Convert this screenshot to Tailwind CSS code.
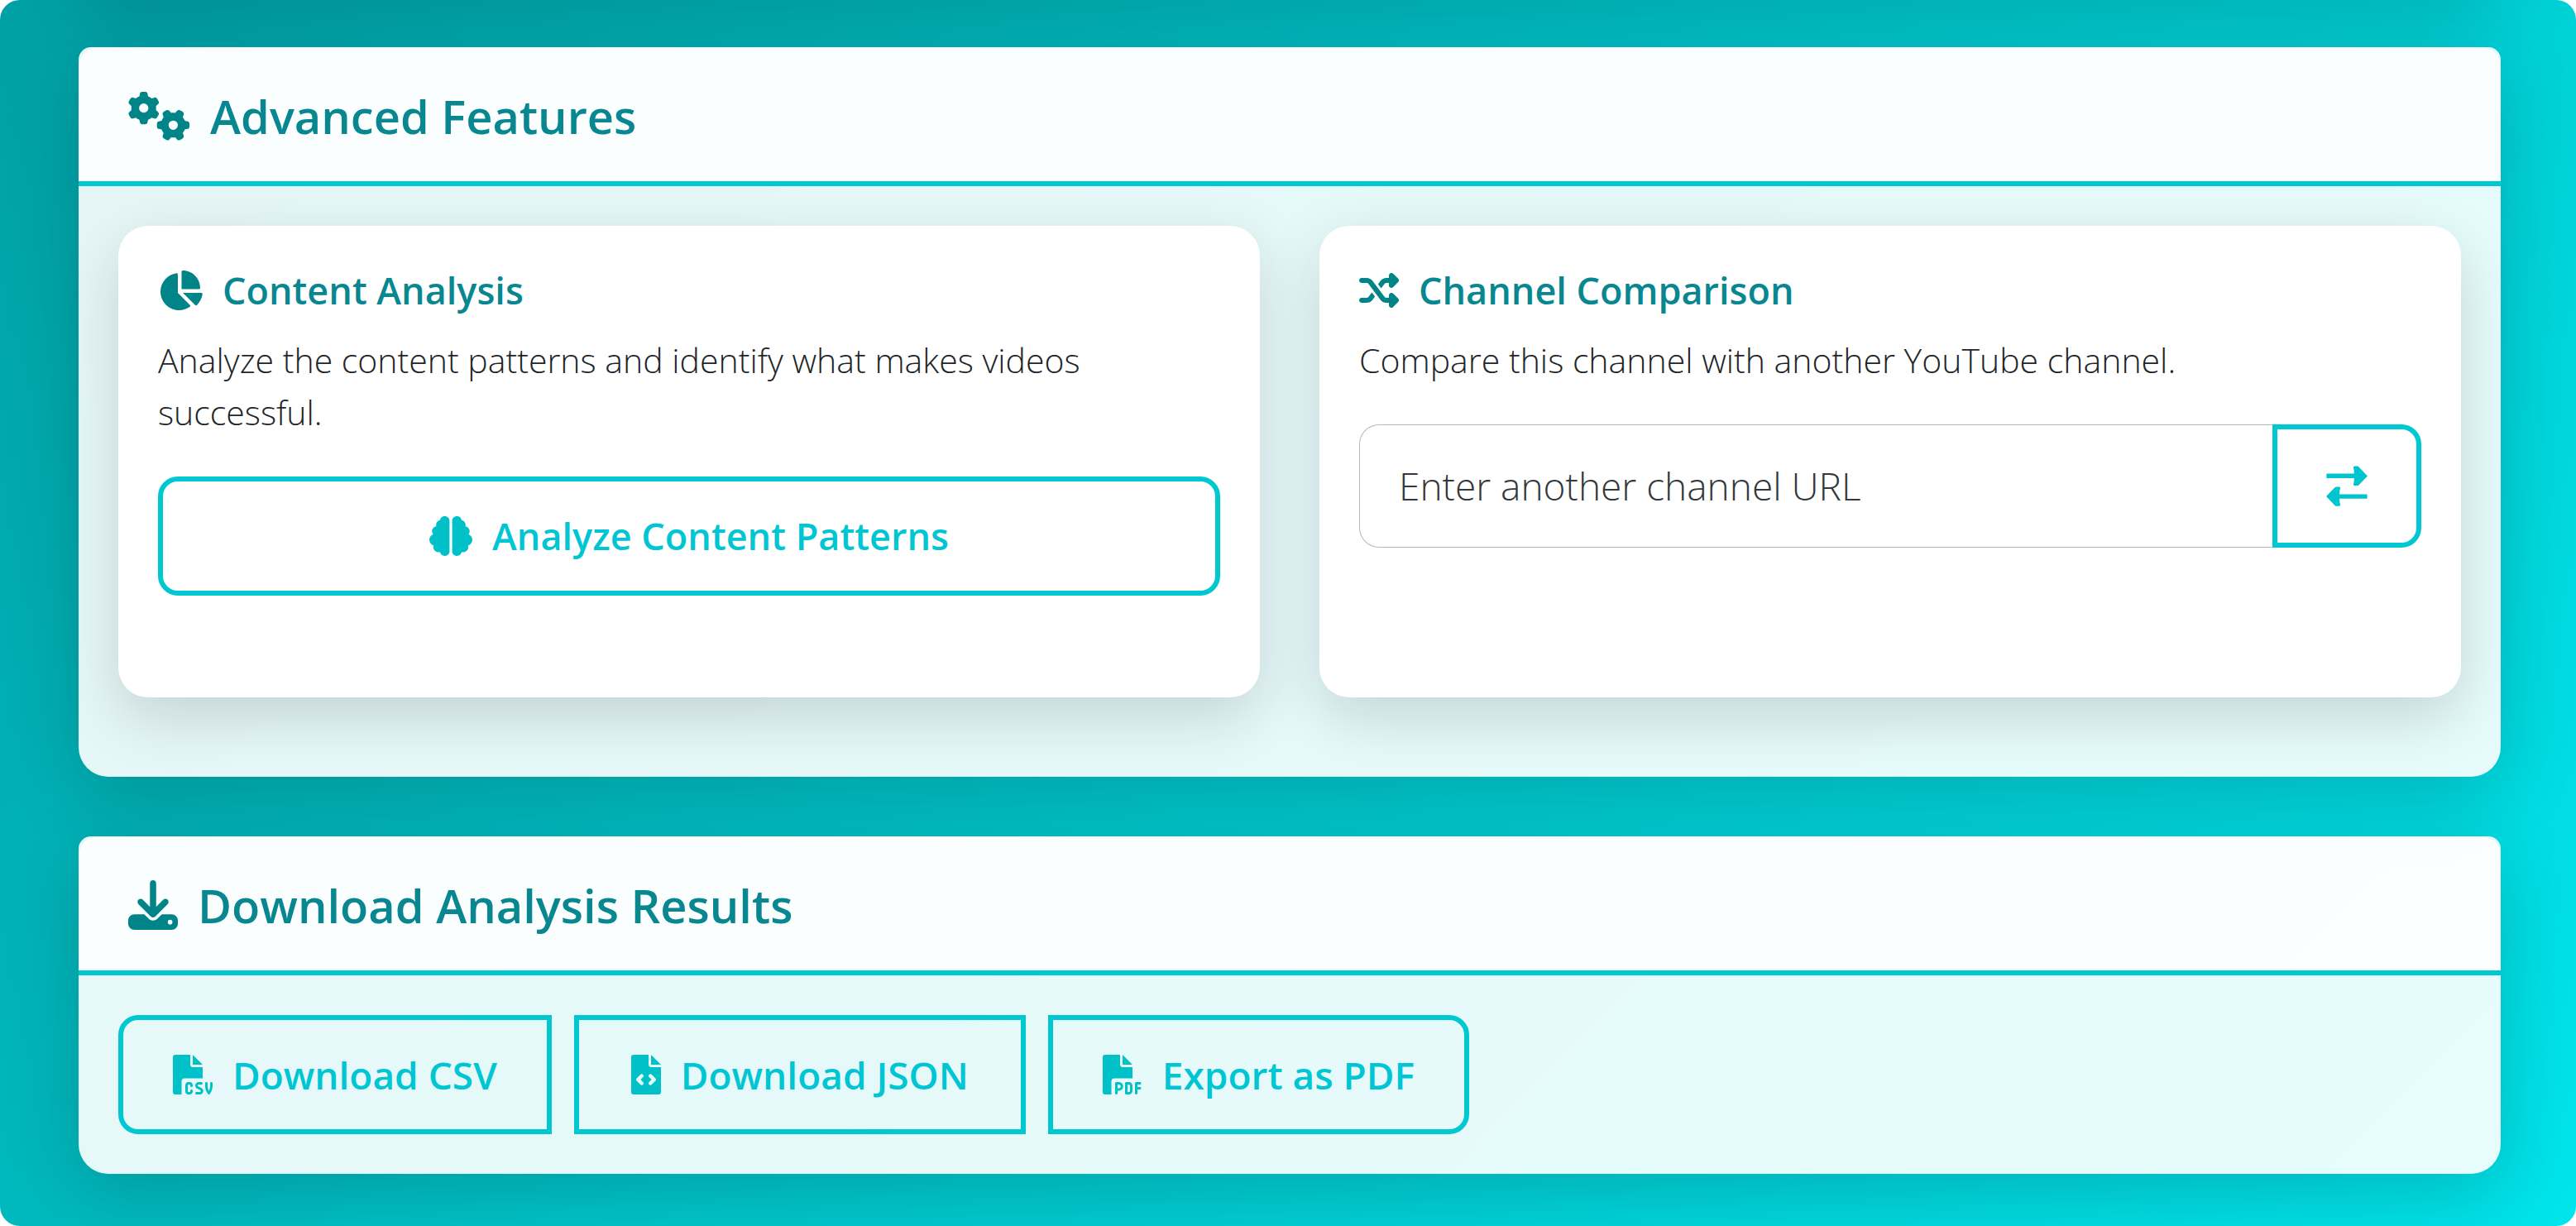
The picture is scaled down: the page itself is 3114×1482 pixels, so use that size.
<!DOCTYPE html>
<html lang="en">
<head>
<meta charset="utf-8">
<title>Channel Analysis</title>
<script src="https://cdn.jsdelivr.net/npm/@tailwindcss/browser@4"></script>
</head>
<body class="bg-white font-['Open_Sans',sans-serif]">
<main class="relative flex min-h-screen flex-col gap-[72px] overflow-hidden rounded-[24px] bg-[linear-gradient(135deg,#00a0a5,#00c6cb_50%,#00e4eb)] pr-[91px] pl-[95px] pt-[57px] pb-[63px]">
  <div class="absolute inset-x-[95px] -top-[100px] h-[85px] rounded-[36px] shadow-[0_24px_90px_rgba(0,0,0,0.18)]"></div>

  <section class="relative rounded-t-[15px] rounded-b-[36px] bg-white/90 shadow-[0_24px_90px_rgba(0,0,0,0.18)]">
    <header class="flex h-[168px] items-center rounded-t-[24px] border-b-[6px] border-[#00c8d0] bg-white/85 px-[60px] pt-[4px]">
      <h2 class="flex items-center gap-[24px] text-[56px] leading-[66px] font-semibold text-[#088790]">
        <svg class="h-[60px] w-[75px]" viewBox="0 0 640 512" fill="#008488" aria-hidden="true">
          <path id="gear" fill-rule="evenodd" d="M308.5 135.3c7.1-6.3 9.9-16.2 6.2-25c-2.3-5.3-4.8-10.5-7.6-15.5L304 89.4c-3-5-6.3-9.9-9.8-14.6c-5.7-7.6-15.7-10.1-24.7-7.1l-28.2 9.3c-10.7-8.8-23-16-36.2-20.9L199 27.1c-1.9-9.3-9.1-16.7-18.5-17.8C173.9 8.4 167.2 8 160.4 8h-.7c-6.8 0-13.5 .4-20.1 1.2c-9.4 1.1-16.6 8.6-18.5 17.8L115 56.1c-13.3 5-25.5 12.1-36.2 20.9L50.5 67.8c-9-3-19-.5-24.7 7.1c-3.5 4.7-6.8 9.6-9.9 14.6l-3 5.3c-2.8 5-5.3 10.2-7.6 15.6c-3.7 8.7-.9 18.6 6.2 25l22.2 19.8C32.6 161.9 32 168.9 32 176s.6 14.1 1.7 20.9L11.5 216.7c-7.1 6.3-9.9 16.2-6.2 25c2.3 5.3 4.8 10.5 7.6 15.6l3 5.2c3 5.1 6.3 9.9 9.9 14.6c5.7 7.6 15.7 10.1 24.7 7.1l28.2-9.3c10.7 8.8 23 16 36.2 20.9l6.1 29.1c1.9 9.3 9.1 16.7 18.5 17.8c6.7 .8 13.5 1.2 20.4 1.2s13.7-.4 20.4-1.2c9.4-1.1 16.6-8.6 18.5-17.8l6.1-29.1c13.3-5 25.5-12.1 36.2-20.9l28.2 9.3c9 3 19 .5 24.7-7.1c3.5-4.7 6.8-9.5 9.8-14.6l3.1-5.4c2.8-5 5.3-10.2 7.6-15.5c3.7-8.7 .9-18.6-6.2-25l-22.2-19.8c1.1-6.8 1.7-13.8 1.7-20.9s-.6-14.1-1.7-20.9l22.2-19.8zM112 176a48 48 0 1 1 96 0 48 48 0 1 1 -96 0z"/>
          <use href="#gear" transform="translate(464 352) rotate(90) translate(-160 -176)"/>
        </svg>
        Advanced Features
      </h2>
    </header>
    <div class="grid grid-cols-2 gap-[72px] px-[48px] pt-[48px] pb-[96px]">
      <article class="rounded-[36px] bg-white px-[48px] pt-[48px] pb-[123px] shadow-[0_24px_72px_rgba(0,0,0,0.15)]">
        <h3 class="mb-[24px] flex items-center gap-[24px] text-[45px] leading-[59px] font-semibold text-[#088790]">
          <svg class="h-[48px] w-[54px]" viewBox="0 0 576 512" fill="#008488" aria-hidden="true"><path d="M304 240V16.6c0-9 7-16.6 16-16.6C443.7 0 544 100.3 544 224c0 9-7.6 16-16.6 16H304zM32 272C32 150.7 122.1 50.3 239 34.3c9.2-1.3 17 6.1 17 15.4V288L412.5 444.5c6.7 6.7 6.2 17.7-1.5 23.1C371.8 495.6 323.8 512 272 512C139.5 512 32 404.6 32 272zm526.4 16c9.3 0 16.6 7.8 15.4 17c-7.7 55.9-34.6 105.6-73.9 142.3c-6 5.6-15.4 5.2-21.2-.7L320 288H558.4z"/></svg>
          Content Analysis
        </h3>
        <p class="mb-[46px] text-[41px] leading-[63px] font-light text-[#212529]">Analyze the content patterns and identify what makes videos successful.</p>
        <button type="button" class="flex h-[144px] w-full items-center justify-center gap-[24px] rounded-[24px] border-[6px] border-[#00c8d0] text-[45px] font-semibold text-[#00c5d2]">
          <svg class="h-[48px] w-[52px]" preserveAspectRatio="none" viewBox="0 0 512 512" fill="#00c1c8" aria-hidden="true"><path d="M184 0c30.9 0 56 25.1 56 56V456c0 30.9-25.1 56-56 56c-28.9 0-52.7-21.9-55.7-50.1c-5.2 1.4-10.7 2.1-16.3 2.1c-35.3 0-64-28.7-64-64c0-7.4 1.3-14.6 3.6-21.2C21.4 367.4 0 338.2 0 304c0-31.9 18.7-59.5 45.8-72.3C37.1 220.8 32 207 32 192c0-30.7 21.6-56.3 50.4-62.6C80.8 123.9 80 118 80 112c0-29.9 20.6-55.1 48.3-62.1C131.3 21.9 155.1 0 184 0zM328 0c28.9 0 52.6 21.9 55.7 49.9c27.8 7 48.3 32.1 48.3 62.1c0 6-.8 11.9-2.4 17.4c28.8 6.2 50.4 31.9 50.4 62.6c0 15-5.1 28.8-13.8 39.7C493.3 244.5 512 272.1 512 304c0 34.2-21.4 63.4-51.6 74.8c2.3 6.6 3.6 13.8 3.6 21.2c0 35.3-28.7 64-64 64c-5.6 0-11.1-.7-16.3-2.1c-3 28.2-26.8 50.1-55.7 50.1c-30.9 0-56-25.1-56-56V56c0-30.9 25.1-56 56-56z"/></svg>
          Analyze Content Patterns
        </button>
      </article>
      <article class="rounded-[36px] bg-white px-[48px] pt-[48px] shadow-[0_24px_72px_rgba(0,0,0,0.15)]">
        <h3 class="mb-[24px] flex items-center gap-[24px] text-[45px] leading-[59px] font-semibold text-[#088790]">
          <svg class="size-[48px]" viewBox="0 0 512 512" fill="#008488" aria-hidden="true"><path d="M403.8 34.4c12-5 25.7-2.2 34.9 6.9l64 64c6 6 9.4 14.1 9.4 22.6s-3.4 16.6-9.4 22.6l-64 64c-9.2 9.2-22.9 11.9-34.9 6.9s-19.8-16.6-19.8-29.6V160H352c-10.1 0-19.6 4.7-25.6 12.8L284 229.3 244 176l31.2-41.6C293.3 110.2 321.8 96 352 96h32V64c0-12.9 7.8-24.6 19.8-29.6zM164 282.7L204 336l-31.2 41.6C154.7 401.8 126.2 416 96 416H32c-17.7 0-32-14.3-32-32s14.3-32 32-32H96c10.1 0 19.6-4.7 25.6-12.8L164 282.7zm274.6 188c-9.2 9.2-22.9 11.9-34.9 6.9s-19.8-16.6-19.8-29.6V416H352c-30.2 0-58.7-14.2-76.8-38.4L121.6 172.8c-6-8.1-15.5-12.8-25.6-12.8H32c-17.7 0-32-14.3-32-32s14.3-32 32-32H96c30.2 0 58.7 14.2 76.8 38.4L326.4 339.2c6 8.1 15.5 12.8 25.6 12.8h32V320c0-12.9 7.8-24.6 19.8-29.6s25.7-2.2 34.9 6.9l64 64c6 6 9.4 14.1 9.4 22.6s-3.4 16.6-9.4 22.6l-64 64z"/></svg>
          Channel Comparison
        </h3>
        <p class="mb-[46px] text-[41px] leading-[63px] font-light text-[#212529]">Compare this channel with another YouTube channel.</p>
        <form class="flex h-[149px]">
          <input type="url" aria-label="Another channel URL" placeholder="Enter another channel URL" class="min-w-0 flex-1 rounded-l-[24px] border border-r-0 border-[#b4b8ba] bg-white px-[47px] text-[46px] font-light text-[#212529] placeholder:text-[#33383c]">
          <button type="button" aria-label="Compare channels" class="flex w-[180px] items-center justify-center rounded-r-[24px] border-[6px] border-[#00c8d0]">
            <svg class="size-[50px]" viewBox="0 0 512 512" fill="#00c5ce" aria-hidden="true"><path id="arrow" d="M4 98h342Q350 50 336 24Q336 6 352 6h36Q396 6 402 12L512 128 402 240Q396 246 388 246h-36Q336 246 336 230Q350 206 346 154H4z"/><use href="#arrow" transform="translate(512 506) rotate(180)"/></svg>
          </button>
        </form>
      </article>
    </div>
  </section>

  <section class="relative rounded-t-[15px] rounded-b-[36px] bg-white/90 shadow-[0_24px_90px_rgba(0,0,0,0.18)]">
    <header class="flex h-[168px] items-center rounded-t-[24px] border-b-[6px] border-[#00c8d0] bg-white/85 px-[60px] pt-[4px]">
      <h2 class="flex items-center gap-[24px] text-[56px] leading-[66px] font-semibold text-[#088790]">
        <svg class="size-[60px]" viewBox="0 0 512 512" fill="#008488" aria-hidden="true"><path d="M288 32c0-17.7-14.3-32-32-32s-32 14.3-32 32V274.7l-73.4-73.4c-12.5-12.5-32.8-12.5-45.3 0s-12.5 32.8 0 45.3l128 128c12.5 12.5 32.8 12.5 45.3 0l128-128c12.5-12.5 12.5-32.8 0-45.3s-32.8-12.5-45.3 0L288 274.7V32zM64 352c-35.3 0-64 28.7-64 64v32c0 35.3 28.7 64 64 64H448c35.3 0 64-28.7 64-64V416c0-35.3-28.7-64-64-64H346.5l-45.3 45.3c-25 25-65.5 25-90.5 0L165.5 352H64zm368 56a24 24 0 1 1 0 48 24 24 0 1 1 0-48z"/></svg>
        Download Analysis Results
      </h2>
    </header>
    <div class="flex gap-[27px] p-[48px]">
      <button type="button" class="flex h-[144px] items-center gap-[24px] rounded-l-[24px] border-[6px] border-[#00c8d0] px-[60px] text-[46px] font-semibold text-[#00c5d2]">
        <svg class="size-[48px]" viewBox="0 0 512 512" fill="#00c1c8" aria-hidden="true"><path d="M0 30C0 12 12 0 30 0H224V128c0 17.7 14.3 32 32 32H384V304H150c-22 0-38 16-38 38V512H30c-18 0-30-12-30-30V30zm384 98H256V0L384 128zM200 352h16c22.1 0 40 17.9 40 40v8c0 8.8-7.2 16-16 16s-16-7.2-16-16v-8c0-4.4-3.6-8-8-8H200c-4.4 0-8 3.6-8 8v80c0 4.4 3.6 8 8 8h16c4.4 0 8-3.6 8-8v-8c0-8.8 7.2-16 16-16s16 7.2 16 16v8c0 22.1-17.9 40-40 40H200c-22.1 0-40-17.9-40-40V392c0-22.1 17.9-40 40-40zm133.1 0H368c8.8 0 16 7.2 16 16s-7.2 16-16 16H333.1c-7.2 0-13.1 5.9-13.1 13.1c0 5.2 3 9.9 7.8 12l37.4 16.6c16.3 7.2 26.8 23.4 26.8 41.2c0 24.9-20.2 45.1-45.1 45.1H304c-8.8 0-16-7.2-16-16s7.2-16 16-16h42.9c7.2 0 13.1-5.9 13.1-13.1c0-5.2-3-9.9-7.8-12l-37.4-16.6c-16.3-7.2-26.8-23.4-26.8-41.2c0-24.9 20.2-45.1 45.1-45.1zm98.9 0c8.8 0 16 7.2 16 16v31.6c0 23 5.5 45.6 16 66c10.5-20.3 16-42.9 16-66V368c0-8.8 7.2-16 16-16s16 7.2 16 16v31.6c0 34.7-10.3 68.7-29.6 97.6l-5.1 7.7c-3 4.5-8 7.1-13.3 7.1s-10.3-2.7-13.3-7.1l-5.1-7.7c-19.3-28.9-29.6-62.9-29.6-97.6V368c0-8.8 7.2-16 16-16z"/></svg>
        Download CSV
      </button>
      <button type="button" class="flex h-[144px] min-w-[546px] items-center justify-center gap-[24px] border-[6px] border-[#00c8d0] px-[60px] text-[46px] font-semibold text-[#00c5d2]">
        <svg class="h-[48px] w-[36px]" viewBox="0 0 384 512" fill="#00c1c8" aria-hidden="true"><path d="M30 0C12 0 0 12 0 30V482c0 18 12 30 30 30H354c18 0 30-12 30-30V160H256c-17.7 0-32-14.3-32-32V0H30zM256 0V128H384L256 0zM153 289l-31 31 31 31c9.4 9.4 9.4 24.6 0 33.9s-24.6 9.4-33.9 0L71 337c-9.4-9.4-9.4-24.6 0-33.9l48-48c9.4-9.4 24.6-9.4 33.9 0s9.4 24.6 0 33.9zM265 255l48 48c9.4 9.4 9.4 24.6 0 33.9l-48 48c-9.4 9.4-24.6 9.4-33.9 0s-9.4-24.6 0-33.9l31-31-31-31c-9.4-9.4-9.4-24.6 0-33.9s24.6-9.4 33.9 0z"/></svg>
        Download JSON
      </button>
      <button type="button" class="flex h-[144px] items-center gap-[24px] rounded-r-[24px] border-[6px] border-[#00c8d0] px-[60px] text-[46px] font-semibold text-[#00c5d2]">
        <svg class="size-[48px]" viewBox="0 0 512 512" fill="#00c1c8" aria-hidden="true"><path d="M0 30C0 12 12 0 30 0H224V128c0 17.7 14.3 32 32 32H384V304H150c-22 0-38 16-38 38V512H30c-18 0-30-12-30-30V30zm384 98H256V0L384 128zM176 352h32c30.9 0 56 25.1 56 56s-25.1 56-56 56H192v32c0 8.8-7.2 16-16 16s-16-7.2-16-16V448 368c0-8.8 7.2-16 16-16zm32 80c13.3 0 24-10.7 24-24s-10.7-24-24-24H192v48h16zm96-80h32c26.5 0 48 21.5 48 48v64c0 26.5-21.5 48-48 48H304c-8.8 0-16-7.2-16-16V368c0-8.8 7.2-16 16-16zm32 128c8.8 0 16-7.2 16-16V400c0-8.8-7.2-16-16-16H320v96h16zm80-112c0-8.8 7.2-16 16-16h48c8.8 0 16 7.2 16 16s-7.2 16-16 16H448v32h32c8.8 0 16 7.2 16 16s-7.2 16-16 16H448v48c0 8.8-7.2 16-16 16s-16-7.2-16-16V432 368z"/></svg>
        Export as PDF
      </button>
    </div>
  </section>
</main>
</body>
</html>
